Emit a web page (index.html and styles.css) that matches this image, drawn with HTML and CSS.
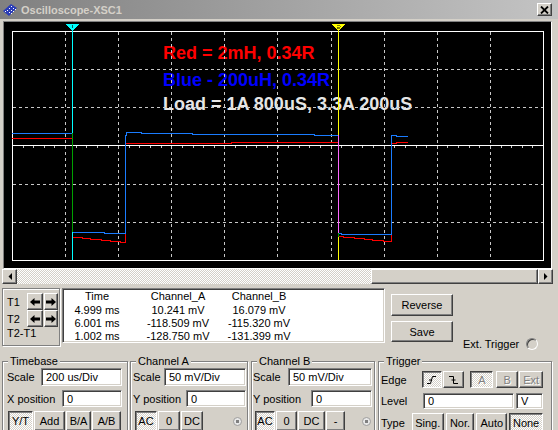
FILE: index.html
```html
<!DOCTYPE html>
<html>
<head>
  <meta charset="UTF-8">
  <link rel="stylesheet" href="styles.css">
</head>
<body>
<div class="window">

  <!-- title bar -->
  <div class="titlebar">
    <svg class="app-icon" width="16" height="16" viewBox="0 0 16 16">
      <polygon points="1,9 9,2 15,6 7,14" fill="#2a3cb8"/>
      <g fill="#fff">
        <rect x="5" y="8" width="1" height="1"/><rect x="7" y="6" width="1" height="1"/>
        <rect x="9" y="4" width="1" height="1"/><rect x="7" y="10" width="1" height="1"/>
        <rect x="9" y="8" width="1" height="1"/><rect x="11" y="6" width="1" height="1"/>
        <rect x="3" y="9" width="1" height="1"/><rect x="9" y="11" width="1" height="1"/>
        <rect x="11" y="9" width="1" height="1"/><rect x="13" y="7" width="1" height="1"/>
      </g>
    </svg>
    <span class="title">Oscilloscope-XSC1</span>
    <button class="btn close-btn">
      <svg width="9" height="8" viewBox="0 0 9 8"><path d="M1 0.5L8 7.5M8 0.5L1 7.5" stroke="#000" stroke-width="1.8"/></svg>
    </button>
  </div>

  <!-- scope screen -->
  <div class="screen">
    <svg class="scope" width="547" height="246" viewBox="4 22 547 246">
      <rect x="4" y="22" width="547" height="246" fill="#000"/>

      <g class="notes">
        <text x="163" y="59" fill="#ff0000">Red = 2mH, 0.34R</text>
        <text x="163" y="86" fill="#0000ff">Blue - 200uH, 0.34R</text>
        <text x="163" y="110" fill="#e6e6e6">Load = 1A 800uS, 3.3A 200uS</text>
      </g>

      <path class="grid" d="M65.5 32V260M118.5 32V260M171.5 32V260M224.5 32V260M277.5 32V260M331.5 32V260M384.5 32V260M437.5 32V260M490.5 32V260M13 69.5H543M13 107.5H543M13 184.5H543M13 222.5H543"/>
      <path d="M12 145.5H543" stroke="#fff"/>
      <path class="ticks" d="M12 147H543"/>
      <rect x="12.5" y="31.5" width="531" height="229" fill="none" stroke="#fff"/>

      <!-- channel A -->
      <path class="trace" stroke="#ff0000" d="M12 138.5H72.5V237.5H82.5V238.5H90.5V239.5H101.5V240.5H110V241.5H120V242.5H125.5V143.5H231V142.5H338.5V236.5H343V237.5H354V238.5H364V239.5H372V240.5H383V241.5H391.5V143.5H396V142.5H408"/>
      <!-- channel B -->
      <path class="trace" stroke="#1a7cff" d="M12 133.5H72.5V232.5H104V233.5H125.5V135H126.5V132.5H141V133.5H192V134.5H314V135.5H338.5V233.5H341V234.5H391.5V135.5H396V136.5H408"/>

      <!-- cursors -->
      <path d="M72.5 31V260" stroke="#00ffff"/>
      <path d="M72.5 133V232" stroke="#00a000"/>
      <polygon points="65,24 80,24 72.5,31" fill="#00ffff"/>
      <path d="M72.5 25V28" stroke="#006060"/>

      <path d="M338.5 31V260" stroke="#ffff00"/>
      <path d="M338.5 135V233" stroke="#ff66ff"/>
      <path d="M338.5 233V237" stroke="#00a000"/>
      <polygon points="331,24 346,24 338.5,31" fill="#ffff00"/>
      <path d="M337 25.5H340V27H337V28.5H340" stroke="#606000" stroke-width="0.8" fill="none"/>
    </svg>
  </div>

  <!-- horizontal scroll bar -->
  <div class="hscroll">
    <button class="btn sb-btn">
      <svg width="4" height="7" viewBox="0 0 4 7"><polygon points="4,0 4,7 0.5,3.5" fill="#000"/></svg>
    </button>
    <div class="sb-track"></div>
    <div class="sb-thumb"></div>
    <button class="btn sb-btn">
      <svg width="4" height="7" viewBox="0 0 4 7"><polygon points="0,0 0,7 3.5,3.5" fill="#000"/></svg>
    </button>
  </div>

  <!-- cursor readout -->
  <div class="readout-row">
    <div class="cursors">
      <span class="t-label">T1</span>
      <button class="btn arrow-btn">
        <svg width="10" height="8" viewBox="0 0 10 8"><polygon points="0,4 4.5,0 4.5,2.5 10,2.5 10,5.5 4.5,5.5 4.5,8" fill="#000"/></svg>
      </button>
      <button class="btn arrow-btn">
        <svg width="10" height="8" viewBox="0 0 10 8"><polygon points="10,4 5.5,0 5.5,2.5 0,2.5 0,5.5 5.5,5.5 5.5,8" fill="#000"/></svg>
      </button>
      <span class="t-label">T2</span>
      <button class="btn arrow-btn">
        <svg width="10" height="8" viewBox="0 0 10 8"><polygon points="0,4 4.5,0 4.5,2.5 10,2.5 10,5.5 4.5,5.5 4.5,8" fill="#000"/></svg>
      </button>
      <button class="btn arrow-btn">
        <svg width="10" height="8" viewBox="0 0 10 8"><polygon points="10,4 5.5,0 5.5,2.5 0,2.5 0,5.5 5.5,5.5 5.5,8" fill="#000"/></svg>
      </button>
      <span class="t-diff">T2-T1</span>
    </div>

    <div class="readout">
      <table>
        <tr><td class="c-time">Time</td><td class="c-a">Channel_A</td><td class="c-b">Channel_B</td></tr>
        <tr><td>4.999 ms</td><td>10.241 mV</td><td>16.079 mV</td></tr>
        <tr><td>6.001 ms</td><td>-118.509 mV</td><td>-115.320 mV</td></tr>
        <tr><td>1.002 ms</td><td>-128.750 mV</td><td>-131.399 mV</td></tr>
      </table>
    </div>

    <div class="side-btns">
      <button class="btn reverse-btn">Reverse</button>
      <button class="btn save-btn">Save</button>
    </div>

    <div class="ext-trigger">
      <span>Ext. Trigger</span>
      <span class="radio"></span>
    </div>
  </div>

  <!-- settings -->
  <div class="controls">
    <div class="group timebase">
      <span class="group-title">Timebase</span>
      <div class="row">
        <span>Scale</span>
        <input class="field w81" type="text" value="200 us/Div">
      </div>
      <div class="row row-2">
        <span>X position</span>
        <input class="field w60" type="text" value="0">
      </div>
      <div class="btn-row">
        <button class="btn on" style="width:25px">Y/T</button>
        <button class="btn" style="width:31px">Add</button>
        <button class="btn" style="width:25px">B/A</button>
        <button class="btn" style="width:29px">A/B</button>
      </div>
    </div>

    <div class="group chan-a">
      <span class="group-title">Channel A</span>
      <div class="row">
        <span>Scale</span>
        <input class="field w82" type="text" value="50 mV/Div">
      </div>
      <div class="row row-2">
        <span>Y position</span>
        <input class="field w60" type="text" value="0">
      </div>
      <div class="btn-row">
        <button class="btn on" style="width:22px">AC</button>
        <button class="btn" style="width:22px">0</button>
        <button class="btn" style="width:22px">DC</button>
        <span class="mini-radio"></span>
      </div>
    </div>

    <div class="group chan-b">
      <span class="group-title">Channel B</span>
      <div class="row">
        <span>Scale</span>
        <input class="field w84" type="text" value="50 mV/Div">
      </div>
      <div class="row row-2">
        <span>Y position</span>
        <input class="field w61" type="text" value="0">
      </div>
      <div class="btn-row">
        <button class="btn on" style="width:20px">AC</button>
        <button class="btn" style="width:21px">0</button>
        <button class="btn" style="width:27px">DC</button>
        <button class="btn" style="width:19px">-</button>
        <span class="mini-radio"></span>
      </div>
    </div>

    <div class="group trigger">
      <span class="group-title">Trigger</span>
      <div class="row edge-row">
        <span class="lbl-edge">Edge</span>
        <button class="btn on" style="width:20px">
          <svg width="9" height="8" viewBox="0 0 9 8"><path d="M0 7.5H3.5L5.5 0.5H9M2 4H5" stroke="#000" fill="none"/></svg>
        </button>
        <button class="btn" style="width:22px">
          <svg width="9" height="8" viewBox="0 0 9 8"><path d="M0 0.5H4.5V7.5H9M2.5 4H6.5" stroke="#000" fill="none"/></svg>
        </button>
        <button class="btn on" disabled style="width:23px;margin-left:5px">A</button>
        <button class="btn" disabled style="width:22px;margin-left:2px">B</button>
        <button class="btn" disabled style="width:24px">Ext</button>
      </div>
      <div class="row level-row">
        <span class="lbl-level">Level</span>
        <input class="field w91" type="text" value="0">
        <input class="field w27" type="text" value="V">
      </div>
      <div class="btn-row type-row">
        <span class="lbl-type">Type</span>
        <button class="btn" style="width:32px">Sing.</button>
        <button class="btn" style="width:29px">Nor.</button>
        <button class="btn" style="width:31px">Auto</button>
        <button class="btn on" style="width:34px">None</button>
      </div>
    </div>
  </div>

</div>
</body>
</html>
```

FILE: styles.css
```css
body {
  margin: 0;
  background: #d4d0c8;
  font: 11px "Liberation Sans", Arial, sans-serif;
  color: #000;
}
.window {
  width: 558px;
  height: 430px;
  overflow: hidden;
  background: #d4d0c8;
}

/* generic win2k widgets */
.btn {
  box-sizing: border-box;
  display: flex;
  align-items: center;
  justify-content: center;
  padding: 0;
  font: inherit;
  color: #000;
  background: #d4d0c8;
  border: 1px solid;
  border-color: #fff #404040 #404040 #fff;
  box-shadow: inset -1px -1px #808080;
}
.btn.on {
  border-color: #404040 #fff #fff #404040;
  box-shadow: inset 1px 1px #808080;
  background: repeating-conic-gradient(#d4d0c8 0 25%, #fff 0 50%) 0 0 / 2px 2px;
}
.btn:disabled {
  color: #808080;
  text-shadow: 1px 1px #fff;
}
.field {
  box-sizing: border-box;
  height: 100%;
  padding: 0 0 0 4px;
  font: inherit;
  color: #000;
  background: #fff;
  border: 1px solid;
  border-color: #808080 #fff #fff #808080;
  box-shadow: inset 1px 1px #404040, inset -1px -1px #d4d0c8;
  outline: none;
}
.w27 { width: 27px; margin-left: 2px; }
.w60 { width: 60px; }
.w61 { width: 61px; }
.w81 { width: 81px; }
.w82 { width: 82px; }
.w84 { width: 84px; }
.w91 { width: 91px; }

/* title bar */
.titlebar {
  display: flex;
  align-items: center;
  height: 19px;
  padding-left: 2px;
  background: linear-gradient(90deg, #808080, #c4c4c4);
}
.title {
  margin-left: 3px;
  font-weight: bold;
  color: #d4d0c8;
}
.close-btn {
  width: 15px;
  height: 13px;
  margin-left: auto;
  margin-right: 6px;
}

/* screen */
.screen {
  width: 547px;
  height: 246px;
  margin: 2px 0 0 3px;
  border: 1px solid;
  border-color: #808080 #fff #fff #808080;
}
.scope {
  display: block;
  shape-rendering: crispEdges;
}
.notes text {
  font: bold 18px "Liberation Sans", Arial, sans-serif;
}
.grid {
  stroke: #c8c8c8;
  stroke-dasharray: 3 3;
}
.ticks {
  stroke: #c8c8c8;
  stroke-width: 2;
  stroke-dasharray: 1 9.62;
}
.trace {
  fill: none;
}

/* scroll bar */
.hscroll {
  display: flex;
  width: 551px;
  height: 15px;
  margin-left: 2px;
}
.sb-btn {
  width: 15px;
  height: 15px;
}
.sb-track {
  flex: 1;
  background: repeating-conic-gradient(#d4d0c8 0 25%, #fff 0 50%) 0 0 / 2px 2px;
}
.sb-thumb {
  box-sizing: border-box;
  width: 167px;
  border: 1px solid;
  border-color: #fff #404040 #404040 #fff;
  box-shadow: inset -1px -1px #808080;
}

/* readout row */
.readout-row {
  display: flex;
  height: 58px;
  margin-top: 4px;
  padding-left: 2px;
}
.cursors {
  box-sizing: border-box;
  width: 58px;
  height: 58px;
  padding: 4px 0 0 4px;
  border: 1px solid #808080;
  box-shadow: inset 1px 1px #fff, 1px 1px #fff;
  display: grid;
  grid-template-columns: 19px 16px 14px;
  grid-template-rows: 17px 17px 13px;
  column-gap: 1px;
  align-items: center;
}
.arrow-btn {
  height: 17px;
}
.t-diff {
  grid-column: 1 / 4;
  line-height: 13px;
}
.readout {
  box-sizing: border-box;
  width: 323px;
  height: 55px;
  margin-left: 2px;
  background: #fff;
  border: 1px solid;
  border-color: #808080 #fff #fff #808080;
  box-shadow: inset 1px 1px #404040, inset -1px -1px #d4d0c8;
  padding: 1px;
}
.readout table {
  border-collapse: collapse;
}
.readout td {
  padding: 0;
  height: 13.4px;
  line-height: 13px;
  text-align: center;
  white-space: nowrap;
}
.c-time { width: 66px; }
.c-a { width: 96px; }
.c-b { width: 66px; }
.side-btns {
  display: flex;
  flex-direction: column;
  margin-left: 6px;
}
.side-btns .btn {
  width: 62px;
}
.reverse-btn {
  height: 22px;
  margin-top: 6px;
}
.save-btn {
  height: 21px;
  margin-top: 5px;
}
.ext-trigger {
  display: flex;
  align-items: center;
  gap: 7px;
  height: 13px;
  margin: 49px 0 0 10px;
}
.radio {
  box-sizing: border-box;
  width: 12px;
  height: 12px;
  border-radius: 50%;
  border: 1px solid;
  border-color: #808080 #fff #fff #808080;
  box-shadow: inset 1px 1px #404040;
  background: #d4d0c8;
}

/* settings groups */
.controls {
  display: flex;
  margin-top: 15px;
  padding-left: 2px;
}
.group {
  position: relative;
  box-sizing: border-box;
  height: 80px;
  padding-top: 6px;
  border: 1px solid #808080;
  box-shadow: inset 1px 1px #fff, 1px 1px #fff;
}
.group-title {
  position: absolute;
  top: -7px;
  left: 5px;
  padding: 0 2px;
  line-height: 13px;
  background: #d4d0c8;
}
.timebase { width: 126px; }
.chan-a { width: 118px; margin-left: 2px; }
.chan-b { width: 124px; margin-left: 3px; }
.trigger { width: 174px; margin-left: 3px; }

.row {
  display: flex;
  align-items: center;
  height: 18px;
}
.row .field:first-of-type {
  margin-left: auto;
}
.row-2 {
  height: 17px;
  margin-top: 4px;
}
.btn-row {
  display: flex;
  align-items: center;
  gap: 1px;
  height: 20px;
  margin-top: 4px;
}
.btn-row .btn {
  height: 20px;
}
.timebase .row { padding: 0 5px 0 4px; }
.timebase .btn-row { padding-left: 5px; }
.chan-a .row { padding: 0 1px 0 2px; }
.chan-a .btn-row { padding-left: 4px; }
.chan-b .row { padding: 0 2px 0 1px; }
.chan-b .btn-row { padding-left: 3px; }

.mini-radio {
  box-sizing: border-box;
  width: 9px;
  height: 9px;
  margin: 0 5px 0 auto;
  border-radius: 50%;
  border: 1px solid #a0a0a0;
  background: radial-gradient(circle, #808080 0 1.5px, #e8e8e8 2px);
}
.chan-b .mini-radio { margin-right: 3px; }

.trigger .row,
.trigger .btn-row { padding: 0 8px 0 2px; }
.edge-row {
  height: 17px;
  margin-top: 3px;
  gap: 1px;
}
.edge-row .btn { height: 17px; }
.lbl-edge { width: 40px; }
.level-row {
  height: 16px;
  margin-top: 5px;
}
.lbl-level { width: 42px; }
.level-row .field:first-of-type { margin-left: 0; }
.type-row {
  gap: 2px;
  margin-top: 4px;
}
.lbl-type { width: 29px; }
```
